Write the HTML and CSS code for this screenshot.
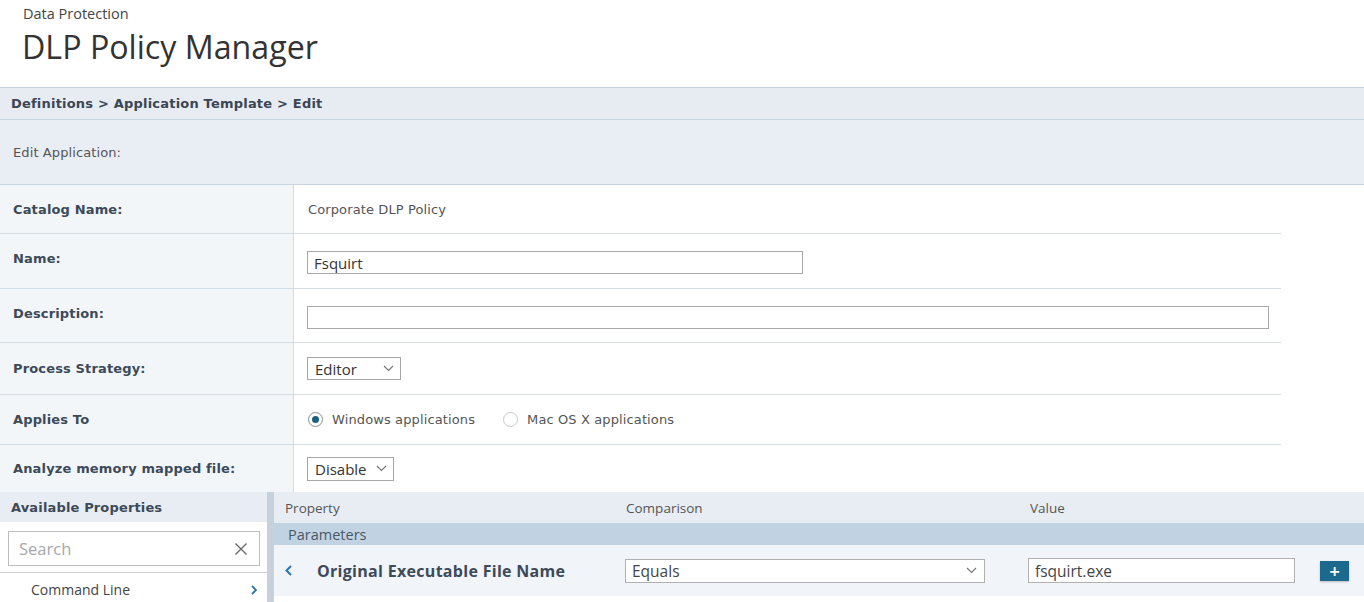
FILE: index.html
```html
<!DOCTYPE html>
<html>
<head>
<meta charset="utf-8">
<title>DLP Policy Manager</title>
<link rel="stylesheet" href="styles.css">
</head>
<body>
<header class="page-head">
  <div class="eyebrow">Data Protection</div>
  <h1 class="title">DLP Policy Manager</h1>
</header>

<div class="crumbs">Definitions &gt; Application Template &gt; Edit</div>
<div class="section-title">Edit Application:</div>

<div class="form">
  <div class="row r-catalog">
    <div class="label">Catalog Name:</div>
    <div class="value"><span class="plain">Corporate DLP Policy</span></div>
  </div>
  <div class="row r-name">
    <div class="label">Name:</div>
    <div class="value"><div class="input input-name">Fsquirt</div></div>
  </div>
  <div class="row r-desc">
    <div class="label">Description:</div>
    <div class="value"><div class="input input-desc"></div></div>
  </div>
  <div class="row r-proc">
    <div class="label">Process Strategy:</div>
    <div class="value">
      <div class="select select-editor"><span>Editor</span>
        <svg class="chev" width="11" height="7" viewBox="0 0 11 7"><polyline points="1,1 5.5,5.5 10,1" fill="none" stroke="#777" stroke-width="1.2"/></svg>
      </div>
    </div>
  </div>
  <div class="row r-applies">
    <div class="label">Applies To</div>
    <div class="value">
      <label class="radio"><span class="dot checked"></span><span class="plain">Windows applications</span></label>
      <label class="radio radio-mac"><span class="dot"></span><span class="plain">Mac OS X applications</span></label>
    </div>
  </div>
  <div class="row r-mem last">
    <div class="label">Analyze memory mapped file:</div>
    <div class="value">
      <div class="select select-disable"><span>Disable</span>
        <svg class="chev" width="11" height="7" viewBox="0 0 11 7"><polyline points="1,1 5.5,5.5 10,1" fill="none" stroke="#777" stroke-width="1.2"/></svg>
      </div>
    </div>
  </div>
</div>

<div class="builder">
  <aside class="props">
    <div class="props-head">Available Properties</div>
    <div class="search-wrap">
      <div class="search"><span>Search</span>
        <svg width="14" height="14" viewBox="0 0 14 14"><path d="M1.5 1.5 L12.5 12.5 M12.5 1.5 L1.5 12.5" stroke="#666" stroke-width="1.3" fill="none"/></svg>
      </div>
    </div>
    <div class="prop-item"><span>Command Line</span>
      <svg width="8" height="12" viewBox="0 0 8 12"><polyline points="2,2 6,6 2,10" fill="none" stroke="#2a78b0" stroke-width="1.8"/></svg>
    </div>
  </aside>
  <div class="divider"></div>
  <section class="conds">
    <div class="conds-head">
      <span class="c-prop">Property</span>
      <span class="c-comp">Comparison</span>
      <span class="c-val">Value</span>
    </div>
    <div class="group">Parameters</div>
    <div class="cond-row">
      <svg class="back" width="9" height="13" viewBox="0 0 9 13"><polyline points="7,2 2.5,6.5 7,11" fill="none" stroke="#2a78b0" stroke-width="2"/></svg>
      <span class="cond-name">Original Executable File Name</span>
      <div class="select select-comp"><span>Equals</span>
        <svg class="chev" width="11" height="7" viewBox="0 0 11 7"><polyline points="1,1 5.5,5.5 10,1" fill="none" stroke="#777" stroke-width="1.2"/></svg>
      </div>
      <div class="input input-val">fsquirt.exe</div>
      <button class="add">+</button>
    </div>
  </section>
</div>
</body>
</html>
```

FILE: styles.css
```css
html, body {
  margin: 0;
  padding: 0;
  background: #ffffff;
}
body {
  width: 1364px;
  height: 602px;
  overflow: hidden;
  font-family: "DejaVu Sans", Verdana, sans-serif;
}

.page-head {
  height: 87px;
  box-sizing: border-box;
  padding: 4px 0 0 23px;
}
.eyebrow {
  font-family: "Open Sans", sans-serif;
  font-size: 14.5px;
  color: #444;
  line-height: 20px;
}
.title {
  margin: 2px 0 0 -1px;
  font-family: "Open Sans", sans-serif;
  font-weight: normal;
  font-size: 32.2px;
  line-height: 42px;
  color: #333;
}

.crumbs {
  height: 31px;
  border-top: 1px solid #c9d3dd;
  border-bottom: 1px solid #c9d3dd;
  background: #e7ecf2;
  box-sizing: content-box;
  padding-left: 11px;
  display: flex;
  align-items: center;
  font-weight: bold;
  font-size: 13px;
  letter-spacing: 0.2px;
  color: #3b4654;
}

.section-title {
  height: 64px;
  background: #e9eef4;
  border-bottom: 1px solid #c9d3dd;
  display: flex;
  align-items: center;
  padding-left: 13px;
  font-size: 13px;
  letter-spacing: 0.1px;
  color: #555;
}

.form {
  width: 1281px;
}
.row {
  display: flex;
  border-bottom: 1px solid #d3dbe3;
}
.row.last {
  border-bottom: none;
}
.r-catalog { height: 48px; }
.r-name { height: 54px; }
.r-desc { height: 53px; }
.r-proc { height: 51px; }
.r-applies { height: 49px; }
.r-mem { height: 47px; }

.label {
  width: 280px;
  flex: none;
  background: #f3f6f9;
  border-right: 1px solid #d3dbe3;
  padding-left: 13px;
  box-sizing: content-box;
  display: flex;
  align-items: center;
  font-weight: bold;
  font-size: 13px;
  letter-spacing: 0.15px;
  color: #3c4a5a;
}
.r-name .label { padding-bottom: 5px; }
.r-desc .label { padding-bottom: 4px; }
.value {
  flex: 1;
  display: flex;
  align-items: center;
  padding-left: 13px;
}
.plain {
  font-size: 13px;
  letter-spacing: 0.12px;
  color: #555;
  padding-left: 1px;
}

.input, .select {
  box-sizing: border-box;
  border: 1px solid #a9a9a9;
  background: #fff;
  font-family: "Open Sans", sans-serif;
  font-size: 15px;
  color: #333;
  display: flex;
  align-items: center;
  padding-left: 6px;
}
.input-name {
  width: 496px;
  height: 23px;
  margin-top: 3px;
}
.input-desc {
  width: 962px;
  height: 23px;
  margin-top: 3px;
}
.select {
  justify-content: space-between;
  padding-right: 6px;
  border-color: #a7a7a7;
}
.select-editor {
  width: 94px;
  height: 23px;
  padding-left: 7px;
}
.select-disable {
  width: 87px;
  height: 24px;
  padding-left: 7px;
}
.chev {
  flex: none;
}

.radio {
  display: flex;
  align-items: center;
}
.radio .dot {
  width: 15px;
  height: 15px;
  box-sizing: border-box;
  border-radius: 50%;
  border: 1px solid #b5b5b5;
  margin-left: 1px;
  margin-right: 8px;
  background: #fff;
  display: flex;
  align-items: center;
  justify-content: center;
}
.radio .dot.checked {
  border-color: #8d8d8d;
}
.radio .dot.checked::after {
  content: "";
  width: 7px;
  height: 7px;
  border-radius: 50%;
  background: #1d5f80;
}
.radio-mac {
  margin-left: 27px;
}
.radio-mac .dot {
  border-color: #c8c8c8;
}

.builder {
  display: flex;
  height: 111px;
}
.props {
  width: 267px;
  flex: none;
}
.props-head {
  height: 30px;
  background: #e8edf3;
  display: flex;
  align-items: center;
  padding-left: 11px;
  font-weight: bold;
  font-size: 13px;
  letter-spacing: 0.15px;
  color: #3c4a5a;
}
.search-wrap {
  padding: 9px 0 0 8px;
  height: 41px;
  border-bottom: 1px solid #cfcfcf;
}
.search {
  width: 252px;
  height: 35px;
  box-sizing: border-box;
  border: 1px solid #bdbdbd;
  display: flex;
  align-items: center;
  justify-content: space-between;
  padding: 0 11px 0 10px;
  font-family: "Open Sans", sans-serif;
  font-size: 16.5px;
  color: #a8a8a8;
}
.prop-item {
  display: flex;
  align-items: center;
  justify-content: space-between;
  padding: 7px 9px 0 31px;
  font-family: "Open Sans", sans-serif;
  font-size: 14px;
  color: #444;
}

.divider {
  width: 7px;
  flex: none;
  background: #c6d1dc;
}

.conds {
  flex: 1;
}
.conds-head {
  height: 31px;
  background: #e8edf3;
  display: flex;
  align-items: center;
  font-family: "Open Sans", sans-serif;
  font-size: 13.5px;
  color: #555;
}
.c-prop { margin-left: 11px; width: 341px; }
.c-comp { width: 404px; }
.group {
  height: 22px;
  background: #c1d3e3;
  display: flex;
  align-items: center;
  padding-left: 14px;
  font-family: "Open Sans", sans-serif;
  font-size: 14.5px;
  color: #4a5868;
}
.cond-row {
  height: 51px;
  background: #f1f5f9;
  display: flex;
  align-items: center;
}
.back {
  margin-left: 10px;
  margin-right: 24px;
  flex: none;
}
.cond-name {
  width: 308px;
  flex: none;
  font-family: "Open Sans", sans-serif;
  font-weight: bold;
  font-size: 16px;
  letter-spacing: 0.3px;
  color: #3d4a5a;
}
.select-comp {
  width: 360px;
  height: 24px;
  padding-left: 6px;
  padding-right: 7px;
  border-color: #b0b0b0;
  font-size: 15.5px;
  color: #444;
}
.input-val {
  margin-left: 43px;
  width: 267px;
  height: 25px;
  border-color: #b0b0b0;
  font-size: 15.5px;
  color: #444;
}
.add {
  margin-left: 25px;
  width: 29px;
  height: 20px;
  border: none;
  padding: 0;
  background: #1b6a8e;
  color: #fff;
  font-family: "DejaVu Sans", sans-serif;
  font-weight: bold;
  font-size: 14px;
  line-height: 20px;
  box-shadow: 0 1px 2px rgba(0,0,0,0.25);
}
```
